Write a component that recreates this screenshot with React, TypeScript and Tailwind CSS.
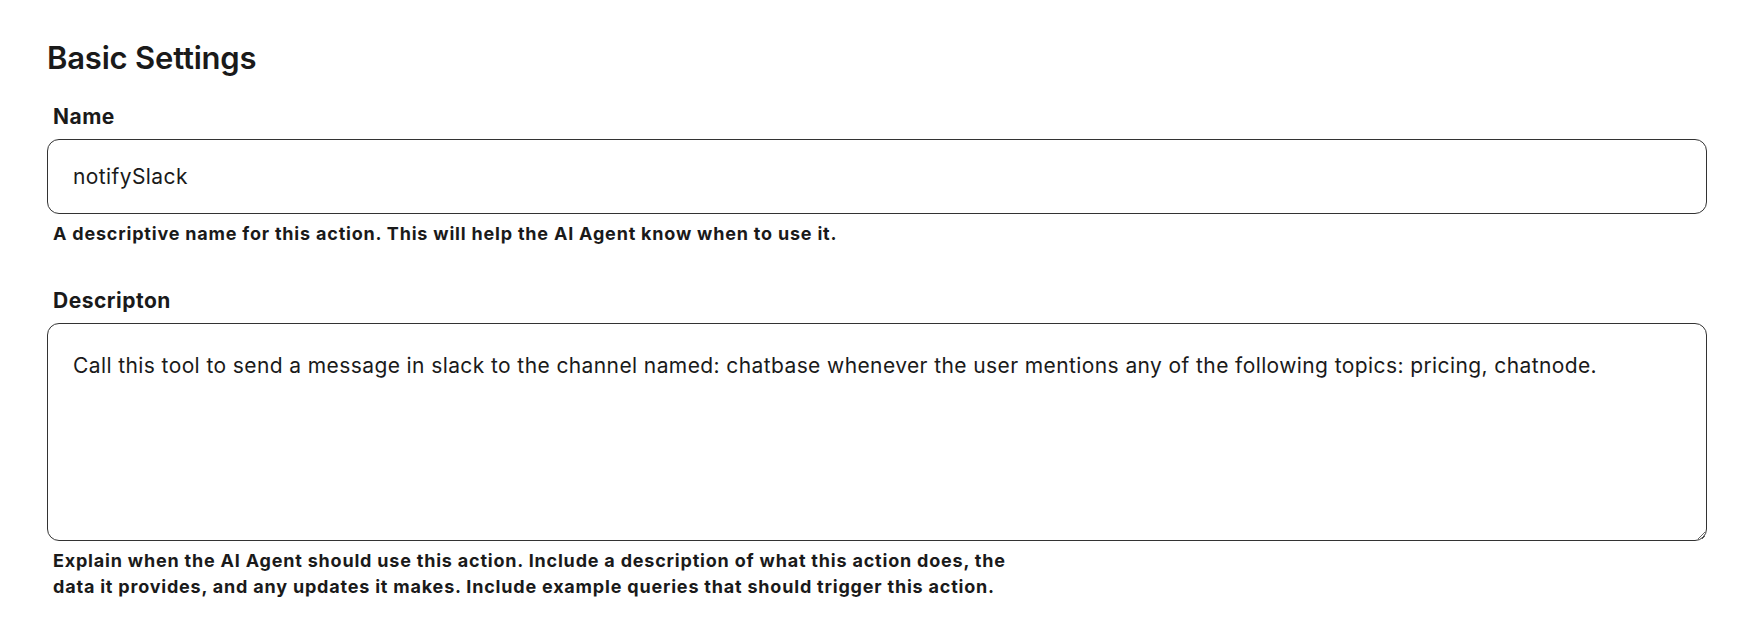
export default function App() {
  return (
    <div
      className="min-h-screen bg-white text-[#1a1a1a]"
      style={{ fontFamily: "Inter, 'Noto Sans', sans-serif" }}
    >
      <div className="pl-[47px] pr-[43px] pt-[38px]">
        {/* Header */}
        <h2 className="text-[31px] leading-[40px] font-semibold tracking-[-0.2px] mb-[26px]">
          Basic Settings
        </h2>

        {/* Name */}
        <div>
          <label className="block px-[6px] text-[21px] leading-[26px] font-bold tracking-[0.5px] mb-[9px]">
            Name
          </label>
          <input
            type="text"
            defaultValue="notifySlack"
            className="w-full h-[75px] px-[25px] rounded-[12px] border border-[#333] bg-white text-[21px] tracking-[0.4px] text-[#1a1a1a] focus:outline-none"
          />
          <p className="px-[6px] mt-[8px] text-[18px] leading-[24px] font-bold tracking-[0.8px]">
            A descriptive name for this action. This will help the AI Agent know when to use it.
          </p>
        </div>

        {/* Description */}
        <div className="mt-[42px]">
          <label className="block px-[6px] text-[21px] leading-[26px] font-bold tracking-[0.5px] mb-[9px]">
            Descripton
          </label>
          <textarea
            defaultValue="Call this tool to send a message in slack to the channel named: chatbase whenever the user mentions any of the following topics: pricing, chatnode."
            className="block w-full h-[218px] px-[25px] pt-[28px] pb-[24px] rounded-[12px] border border-[#333] bg-white text-[21px] leading-[28px] tracking-[0.4px] text-[#1a1a1a] focus:outline-none"
          />
          <p className="px-[6px] mt-[7px] max-w-[985px] text-[18px] leading-[26px] font-bold tracking-[0.8px]">
            Explain when the AI Agent should use this action. Include a description of what this action does, the data it provides, and any updates it makes. Include example queries that should trigger this action.
          </p>
        </div>
      </div>
    </div>
  );
}
